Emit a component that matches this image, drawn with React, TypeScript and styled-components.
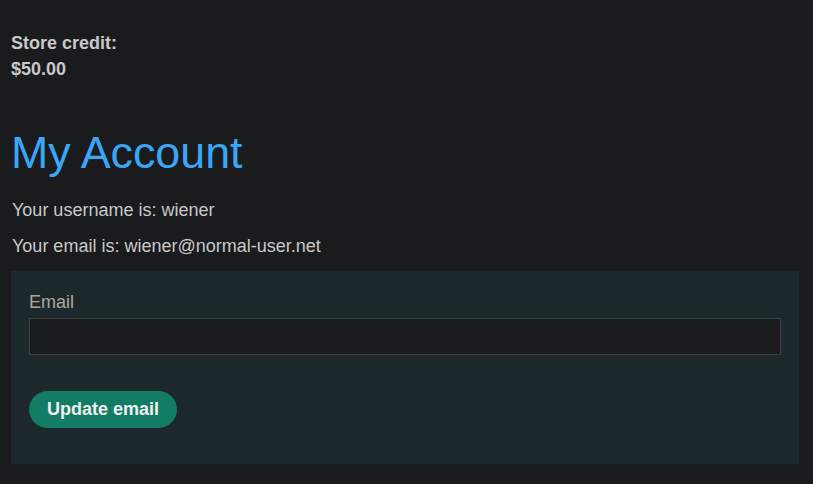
import React from 'react';
import styled, { createGlobalStyle } from 'styled-components';

const GlobalStyle = createGlobalStyle`
  html, body {
    margin: 0;
    padding: 0;
    background-color: #1a1b1d;
  }

  body {
    font-family: 'Liberation Sans', Arial, sans-serif;
    font-size: 18px;
    color: #c9c9c9;
  }
`;

const Page = styled.div`
  padding: 31px 14px 20px 11px;
`;

const Credit = styled.div`
  font-weight: bold;
  line-height: 25.5px;
  color: #c9c9c9;
`;

const Heading = styled.h1`
  margin: 44.5px 0 0 0;
  font-size: 44.8px;
  font-weight: normal;
  line-height: 50px;
  color: #3ba6f5;
`;

const Info = styled.p`
  margin: ${({ $top }: { $top: number }) => $top}px 0 0 1px;
  line-height: 20.7px;
`;

const Form = styled.form`
  display: flex;
  flex-direction: column;
  margin-top: 14.6px;
  padding: 21.7px 18px 36px;
  background-color: #1d282c;
`;

const Label = styled.label`
  line-height: 20.7px;
  color: #a9a89c;
  margin-bottom: 4.6px;
`;

const Input = styled.input`
  box-sizing: border-box;
  height: 37px;
  width: 100%;
  padding: 0 8px;
  background-color: #1a1b1d;
  border: 1px solid #3c4244;
  color: #c9c9c9;
  font-family: inherit;
  font-size: 18px;
  outline: none;
`;

const Button = styled.button`
  align-self: flex-start;
  margin-top: 36px;
  height: 37px;
  width: 148px;
  padding: 0;
  border: none;
  border-radius: 20px;
  background-color: #127c65;
  color: #f0f0f0;
  font-family: 'Liberation Sans', Arial, sans-serif;
  font-size: 18px;
  font-weight: bold;
  cursor: pointer;
`;

const App = () => {
  return (
    <>
      <GlobalStyle />
      <Page>
        <Credit>
          Store credit:
          <br />
          $50.00
        </Credit>
        <Heading>My Account</Heading>
        <Info $top={23}>Your username is: wiener</Info>
        <Info $top={15.3}>Your email is: wiener@normal-user.net</Info>
        <Form onSubmit={(e) => e.preventDefault()}>
          <Label htmlFor="email">Email</Label>
          <Input id="email" type="email" name="email" />
          <Button type="submit">Update email</Button>
        </Form>
      </Page>
    </>
  );
};

export default App;
